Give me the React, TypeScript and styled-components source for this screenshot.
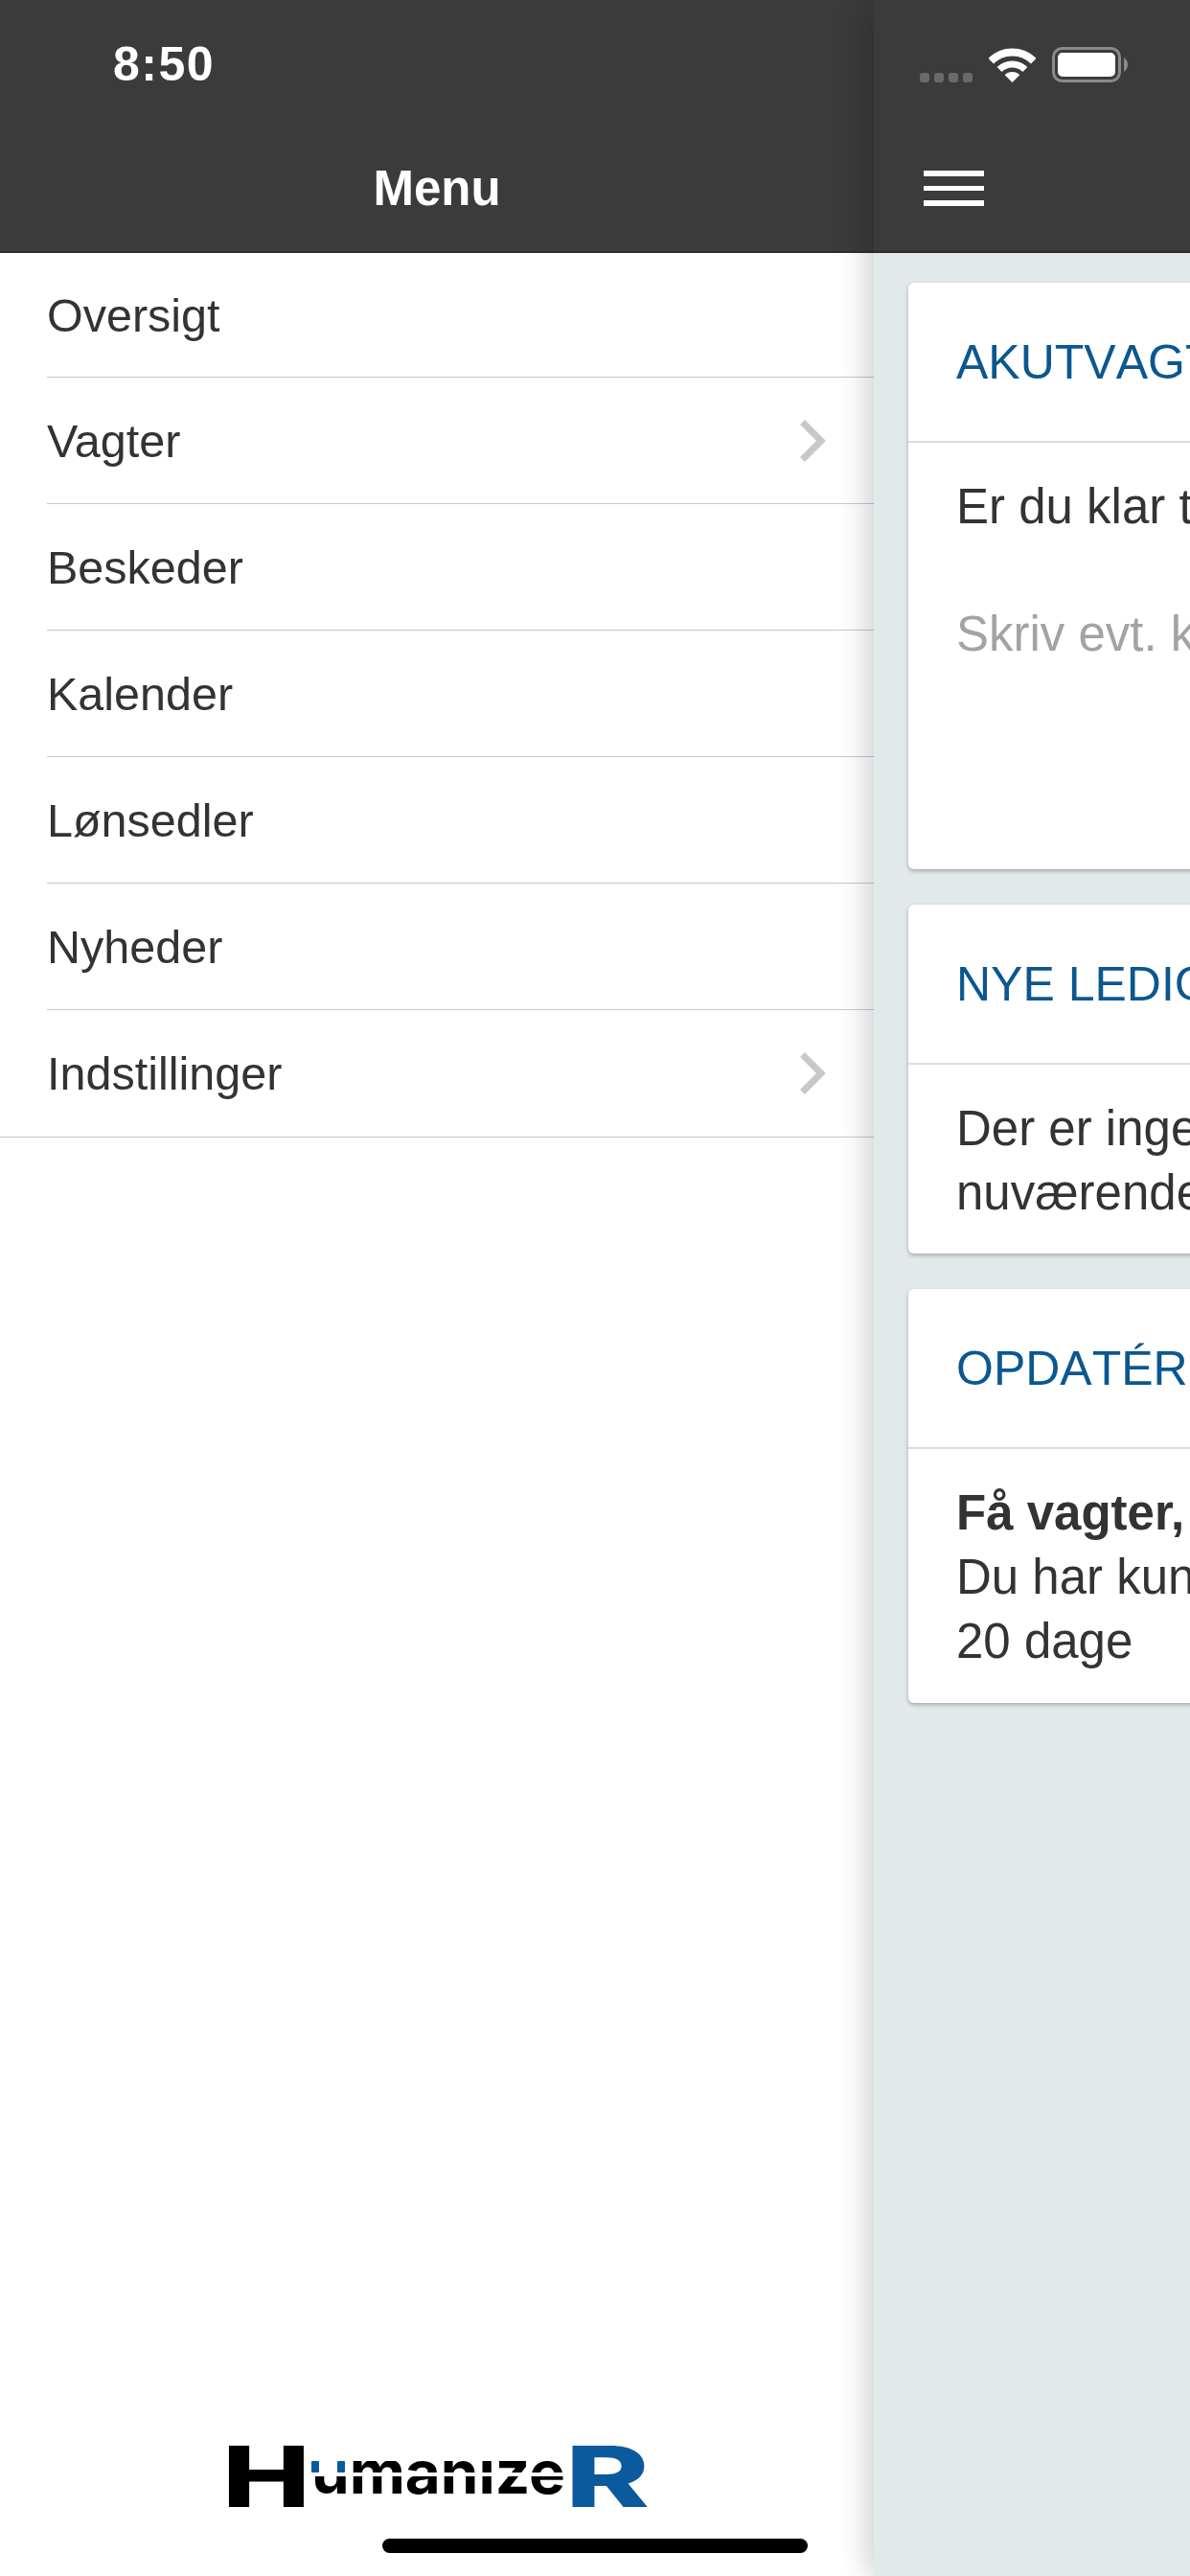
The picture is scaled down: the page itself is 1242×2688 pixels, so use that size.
import React from "react";
import styled, { createGlobalStyle } from "styled-components";

const Global = createGlobalStyle`
  html, body { margin: 0; padding: 0; background: #fff; }
  body { font-family: "Liberation Sans", Arial, sans-serif; color: #333; overflow: hidden; }
  * { box-sizing: border-box; }
`;

const Screen = styled.div`
  position: relative;
  width: 1242px;
  height: 2688px;
  overflow: hidden;
  display: flex;
`;

const Menu = styled.aside`
  width: 912px;
  flex: none;
  display: flex;
  flex-direction: column;
  background: #fff;
`;

const Header = styled.header`
  height: 264px;
  flex: none;
  background: #3b3b3b;
  border-bottom: 2px solid #2c2c2c;
  display: flex;
  flex-direction: column;
`;

const StatusRow = styled.div`
  height: 134px;
  flex: none;
  display: flex;
  align-items: center;
`;

const Time = styled.div`
  margin-left: 118px;
  font-size: 50px;
  font-weight: 700;
  color: #fff;
  letter-spacing: 1.5px;
`;

const NavRow = styled.div<{ $center?: boolean }>`
  flex: 1;
  display: flex;
  align-items: center;
  justify-content: ${(p) => (p.$center ? "center" : "flex-start")};
`;

const Title = styled.h1`
  margin: 0 0 3px;
  font-size: 51px;
  font-weight: 700;
  color: #fff;
`;

const MenuList = styled.ul`
  list-style: none;
  margin: 0;
  padding: 0;
`;

const MenuItem = styled.li`
  &:first-child > div {
    height: 130px;
  }
  &:last-child {
    border-bottom: 1px solid #c8c8cc;
  }
  &:last-child > div {
    border-bottom: none;
  }
`;

const MenuItemInner = styled.div`
  height: 132px;
  margin-left: 49px;
  padding-right: 50px;
  display: flex;
  align-items: center;
  justify-content: space-between;
  border-bottom: 1px solid #c8c8cc;
  font-size: 48.5px;
  color: #333;
`;

const LogoWrap = styled.div`
  margin-top: auto;
  margin-bottom: 72px;
  display: flex;
  justify-content: center;
`;

const LogoMark = styled.svg`
  display: block;
`;

const Panel = styled.main`
  flex: 1;
  min-width: 0;
  position: relative;
  display: flex;
  flex-direction: column;
  background: #e1e9eb;
  box-shadow: -6px 0 30px rgba(0, 0, 0, 0.2);
`;

const PanelHeader = styled(Header)`
  width: 100%;
`;

const StatusIcons = styled.div`
  margin-left: 48px;
  display: flex;
  align-items: flex-end;
`;

const SignalDots = styled.div`
  display: flex;
  gap: 5px;
  margin-right: 17px;
`;

const SignalDot = styled.span`
  width: 10px;
  height: 10px;
  border-radius: 3px;
  background: #6a6a6a;
`;

const WifiIcon = styled.svg`
  display: block;
  margin-right: 17px;
`;

const BatteryIcon = styled.svg`
  display: block;
`;

const Hamburger = styled.div`
  margin: 0 0 3px 52px;
  width: 63px;
  display: flex;
  flex-direction: column;
  gap: 10px;
`;

const HamburgerBar = styled.span`
  height: 5.5px;
  background: #fff;
`;

const CardList = styled.div`
  padding: 31px 0 0 36px;
  display: flex;
  flex-direction: column;
  gap: 37px;
`;

const Card = styled.section<{ $height?: number }>`
  width: 1168px;
  background: #fff;
  border-radius: 6px;
  box-shadow: 0 2px 4px rgba(0, 0, 0, 0.28);
  min-height: ${(p) => p.$height ?? 0}px;
`;

const CardTitle = styled.h2`
  margin: 0;
  height: 167px;
  padding-left: 50px;
  display: flex;
  align-items: center;
  border-bottom: 2px solid #dadcdd;
  font-size: 50px;
  font-weight: 400;
  font-kerning: none;
  color: #0b5790;
  white-space: nowrap;
`;

const CardBody = styled.div`
  padding: 34px 0 30px 50px;
  font-size: 51px;
  line-height: 66.7px;
  color: #333;
  white-space: nowrap;
`;

const Placeholder = styled.div`
  margin-top: 66px;
  color: #a3a3a3;
`;

const Strong = styled.div`
  font-weight: 700;
`;

const HomeIndicator = styled.div`
  position: absolute;
  left: 399px;
  top: 2649px;
  width: 444px;
  height: 15px;
  border-radius: 8px;
  background: #000;
`;

const Chevron = () => (
  <svg width="28" height="46" viewBox="0 0 28 46" fill="none">
    <path d="M3.5 3.5 L23 23 L3.5 42.5" stroke="#c7c7cc" strokeWidth="7" />
  </svg>
);

const Logo = () => (
  <LogoMark width="438" height="64" viewBox="0 0 438 64">
    <text
      x="88"
      y="50"
      textLength="265"
      lengthAdjust="spacingAndGlyphs"
      fontFamily="Inter, sans-serif"
      fontWeight="700"
      fontSize="62"
      fill="#000"
    >
      umanize
    </text>
    <rect x="86" y="0" width="270" height="16" fill="#fff" />
    <rect x="86" y="14" width="40" height="15" fill="#fff" />
    <rect x="86" y="28" width="270" height="4" fill="#fff" />
    <rect x="88" y="16" width="8" height="12" rx="1" fill="#0b5a9e" />
    <rect x="115" y="16" width="8" height="12" rx="1" fill="#0b5a9e" />
    <text
      x="-5"
      y="64"
      textLength="92"
      lengthAdjust="spacingAndGlyphs"
      fontFamily="Inter, sans-serif"
      fontWeight="800"
      fontSize="88"
      fill="#000"
    >
      H
    </text>
    <text
      x="353"
      y="64"
      textLength="88"
      lengthAdjust="spacingAndGlyphs"
      fontFamily="Inter, sans-serif"
      fontWeight="800"
      fontSize="88"
      fill="#0b5a9e"
    >
      R
    </text>
  </LogoMark>
);

const items = [
  { label: "Oversigt" },
  { label: "Vagter", more: true },
  { label: "Beskeder" },
  { label: "Kalender" },
  { label: "Lønsedler" },
  { label: "Nyheder" },
  { label: "Indstillinger", more: true },
];

export default function App() {
  return (
    <Screen>
      <Global />
      <Menu>
        <Header>
          <StatusRow>
            <Time>8:50</Time>
          </StatusRow>
          <NavRow $center>
            <Title>Menu</Title>
          </NavRow>
        </Header>
        <MenuList>
          {items.map((it) => (
            <MenuItem key={it.label}>
              <MenuItemInner>
                {it.label}
                {it.more && <Chevron />}
              </MenuItemInner>
            </MenuItem>
          ))}
        </MenuList>
        <LogoWrap>
          <Logo />
        </LogoWrap>
      </Menu>
      <Panel>
        <PanelHeader>
          <StatusRow>
            <StatusIcons>
              <SignalDots>
                <SignalDot />
                <SignalDot />
                <SignalDot />
                <SignalDot />
              </SignalDots>
              <WifiIcon width="49" height="36" viewBox="0 0 49 36" fill="none">
                <path d="M2.2 13.7 A31.5 31.5 0 0 1 46.8 13.7" stroke="#fff" strokeWidth="8" />
                <path d="M11.1 22.6 A19 19 0 0 1 37.9 22.6" stroke="#fff" strokeWidth="7" />
                <path d="M24.5 36 L16.7 28.2 A11 11 0 0 1 32.3 28.2 Z" fill="#fff" />
              </WifiIcon>
              <BatteryIcon width="79" height="37" viewBox="0 0 79 37" fill="none">
                <rect x="1.5" y="1.5" width="69" height="34" rx="9" stroke="#8a8a8a" strokeWidth="3" />
                <rect x="6" y="6" width="60" height="25" rx="5" fill="#fff" />
                <path d="M75 11 C78 13 79 16 79 18.5 C79 21 78 24 75 26 Z" fill="#8a8a8a" />
              </BatteryIcon>
            </StatusIcons>
          </StatusRow>
          <NavRow>
            <Hamburger>
              <HamburgerBar />
              <HamburgerBar />
              <HamburgerBar />
            </Hamburger>
          </NavRow>
        </PanelHeader>
        <CardList>
          <Card $height={612}>
            <CardTitle>AKUTVAGTER</CardTitle>
            <CardBody>
              Er du klar til at tage en akutvagt?
              <Placeholder>Skriv evt. kommentar her</Placeholder>
            </CardBody>
          </Card>
          <Card>
            <CardTitle>NYE LEDIGE VAGTER</CardTitle>
            <CardBody>
              Der er ingen ledige vagter, der matcher
              <br />
              nuværende søgning
            </CardBody>
          </Card>
          <Card>
            <CardTitle>OPDATÉR DIN PROFIL</CardTitle>
            <CardBody>
              <Strong>Få vagter, hurtigere</Strong>
              Du har kun få dage tilbage, dit kursus udløber om
              <br />
              20 dage
            </CardBody>
          </Card>
        </CardList>
      </Panel>
      <HomeIndicator />
    </Screen>
  );
}
